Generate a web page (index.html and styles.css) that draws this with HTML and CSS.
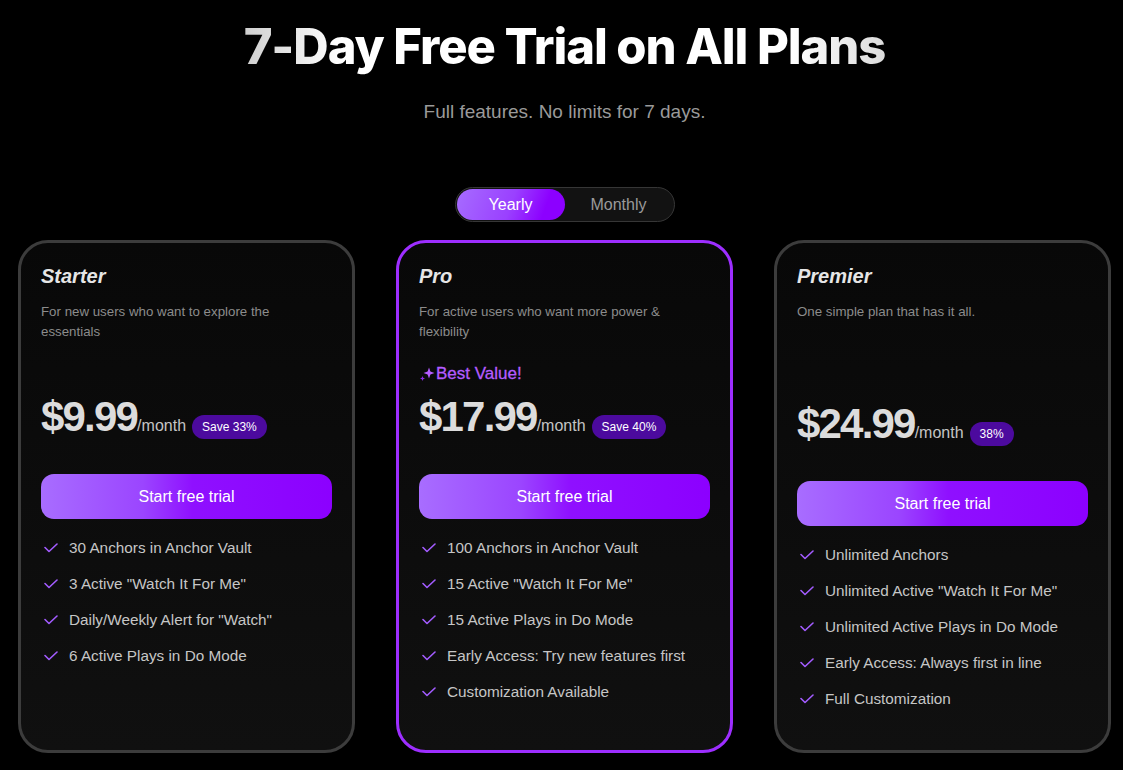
FILE: index.html
```html
<!DOCTYPE html>
<html lang="en">
<head>
    <meta charset="UTF-8">
    <meta name="viewport" content="width=device-width, initial-scale=1.0">
    <title>Pricing</title>
    <link rel="stylesheet" href="styles.css">
</head>
<body>
    <div class="page">
        <header class="hero">
            <h1>7-Day Free Trial on All Plans</h1>
            <p class="subtitle">Full features. No limits for 7 days.</p>
            <div class="billing-toggle">
                <button type="button" class="toggle-option active">Yearly</button>
                <button type="button" class="toggle-option">Monthly</button>
            </div>
        </header>

        <div class="plans">
            <div class="plan">
                <h2 class="plan-name">Starter</h2>
                <p class="plan-desc">For new users who want to explore the essentials</p>
                <div class="best-value hidden">Best Value!</div>
                <div class="price-row">
                    <span class="price">$9.99</span><span class="per">/month</span>
                    <span class="save">Save 33%</span>
                </div>
                <button type="button" class="trial-btn">Start free trial</button>
                <ul class="features">
                    <li>30 Anchors in Anchor Vault</li>
                    <li>3 Active "Watch It For Me"</li>
                    <li>Daily/Weekly Alert for "Watch"</li>
                    <li>6 Active Plays in Do Mode</li>
                </ul>
            </div>

            <div class="plan featured">
                <h2 class="plan-name">Pro</h2>
                <p class="plan-desc">For active users who want more power &amp; flexibility</p>
                <div class="best-value">
                    <svg class="sparkle" width="16" height="16" viewBox="0 0 16 16">
                        <path d="M10 1.5 L11.4 5.6 L15.5 7 L11.4 8.4 L10 12.5 L8.6 8.4 L4.5 7 L8.6 5.6 Z" fill="#b45cff"/>
                        <path d="M3.5 10 L4.2 11.8 L6 12.5 L4.2 13.2 L3.5 15 L2.8 13.2 L1 12.5 L2.8 11.8 Z" fill="#8a2be2"/>
                    </svg>Best Value!
                </div>
                <div class="price-row">
                    <span class="price">$17.99</span><span class="per">/month</span>
                    <span class="save">Save 40%</span>
                </div>
                <button type="button" class="trial-btn">Start free trial</button>
                <ul class="features">
                    <li>100 Anchors in Anchor Vault</li>
                    <li>15 Active "Watch It For Me"</li>
                    <li>15 Active Plays in Do Mode</li>
                    <li>Early Access: Try new features first</li>
                    <li>Customization Available</li>
                </ul>
            </div>

            <div class="plan premier">
                <h2 class="plan-name">Premier</h2>
                <p class="plan-desc">One simple plan that has it all.</p>
                <div class="best-value hidden">Best Value!</div>
                <div class="price-row">
                    <span class="price">$24.99</span><span class="per">/month</span>
                    <span class="save">38%</span>
                </div>
                <button type="button" class="trial-btn">Start free trial</button>
                <ul class="features">
                    <li>Unlimited Anchors</li>
                    <li>Unlimited Active "Watch It For Me"</li>
                    <li>Unlimited Active Plays in Do Mode</li>
                    <li>Early Access: Always first in line</li>
                    <li>Full Customization</li>
                </ul>
            </div>
        </div>
    </div>
</body>
</html>
```

FILE: styles.css
```css
body {
    margin: 0;
    background-color: #000;
    font-family: "Liberation Sans", Arial, sans-serif;
    color: #ddd;
}
.page {
    padding: 0 12px 0 18px;
}
.hero {
    display: flex;
    flex-direction: column;
    align-items: center;
}
.hero h1 {
    margin: 18px 0 0;
    font-family: Inter, "Liberation Sans", sans-serif;
    font-weight: 800;
    font-size: 49px;
    line-height: 58px;
    letter-spacing: -1.1px;
    background: linear-gradient(90deg, #cfcfcf 0%, #fff 15%, #fff 85%, #dcdcdc 100%);
    -webkit-background-clip: text;
    background-clip: text;
    color: transparent;
}
.subtitle {
    margin: 24px 0 0;
    font-size: 19px;
    line-height: 24px;
    color: #9a9a9a;
}
.billing-toggle {
    display: flex;
    margin-top: 63px;
    padding: 1px;
    background-color: #121212;
    border: 1px solid #363636;
    border-radius: 18px;
}
.toggle-option {
    width: 108px;
    height: 31px;
    border: none;
    border-radius: 16px;
    background: transparent;
    font-family: "Liberation Sans", Arial, sans-serif;
    font-size: 16px;
    color: #9a9a9a;
    cursor: pointer;
}
.toggle-option.active {
    background: linear-gradient(110deg, #a66cff 0%, #9a40ff 50%, #8c00ff 80%);
    color: #fff;
}
.plans {
    display: grid;
    grid-template-columns: repeat(3, 337px);
    gap: 41px;
    margin-top: 18px;
    justify-content: center;
}
.plan {
    height: 513px;
    box-sizing: border-box;
    padding: 21px 20px 0;
    border: 3px solid #3c3c3c;
    border-radius: 30px;
    background: linear-gradient(180deg, #080808 0%, #101010 100%);
    display: flex;
    flex-direction: column;
}
.plan.featured {
    border-color: #9d2eff;
}
.plan-name {
    margin: 0;
    font-size: 20px;
    line-height: 24px;
    font-weight: bold;
    font-style: italic;
    color: #e6e6e6;
}
.plan-desc {
    margin: 14px 0 0;
    max-width: 260px;
    min-height: 40px;
    font-size: 13.3px;
    line-height: 20px;
    color: #8c8c8c;
}
.best-value {
    display: flex;
    align-items: center;
    gap: 1px;
    margin-top: 21px;
    height: 22px;
    font-size: 17px;
    color: #b45cff;
    -webkit-text-stroke: 0.3px #b45cff;
}
.best-value.hidden {
    visibility: hidden;
}
.price-row {
    display: flex;
    align-items: baseline;
    margin-top: 8px;
}
.plan.premier .price-row {
    margin-top: 15px;
}
.price {
    font-size: 42px;
    line-height: 48px;
    font-weight: bold;
    letter-spacing: -1.8px;
    color: #dcdcdc;
}
.per {
    font-size: 16px;
    color: #c4c4c4;
}
.save {
    margin-left: 6px;
    padding: 5px 10px;
    font-size: 12px;
    line-height: 14px;
    color: #fff;
    background-color: #4c0a9e;
    border-radius: 12px;
}
.trial-btn {
    margin-top: 33px;
    height: 45px;
    border: none;
    border-radius: 13px;
    background: linear-gradient(90deg, #a86dff 0%, #9b45ff 35%, #8f10ff 52%, #8c00ff 100%);
    color: #fff;
    font-family: "Liberation Sans", Arial, sans-serif;
    font-size: 16px;
    cursor: pointer;
}
.features {
    list-style: none;
    margin: 19px 0 0;
    padding: 0 0 0 3px;
    display: flex;
    flex-direction: column;
    gap: 16px;
}
.features li {
    display: flex;
    align-items: center;
    gap: 11px;
    font-size: 15.3px;
    line-height: 20px;
    color: #c6c6c6;
}
.features li::before {
    content: "";
    flex: none;
    width: 14px;
    height: 10px;
    background: url("data:image/svg+xml,%3Csvg xmlns='http://www.w3.org/2000/svg' width='14' height='10' viewBox='0 0 14 10'%3E%3Cpath d='M1 4.5 L5 8.5 L13 1' fill='none' stroke='%23a35cff' stroke-width='1.6' stroke-linecap='round' stroke-linejoin='round'/%3E%3C/svg%3E") no-repeat;
}
```
